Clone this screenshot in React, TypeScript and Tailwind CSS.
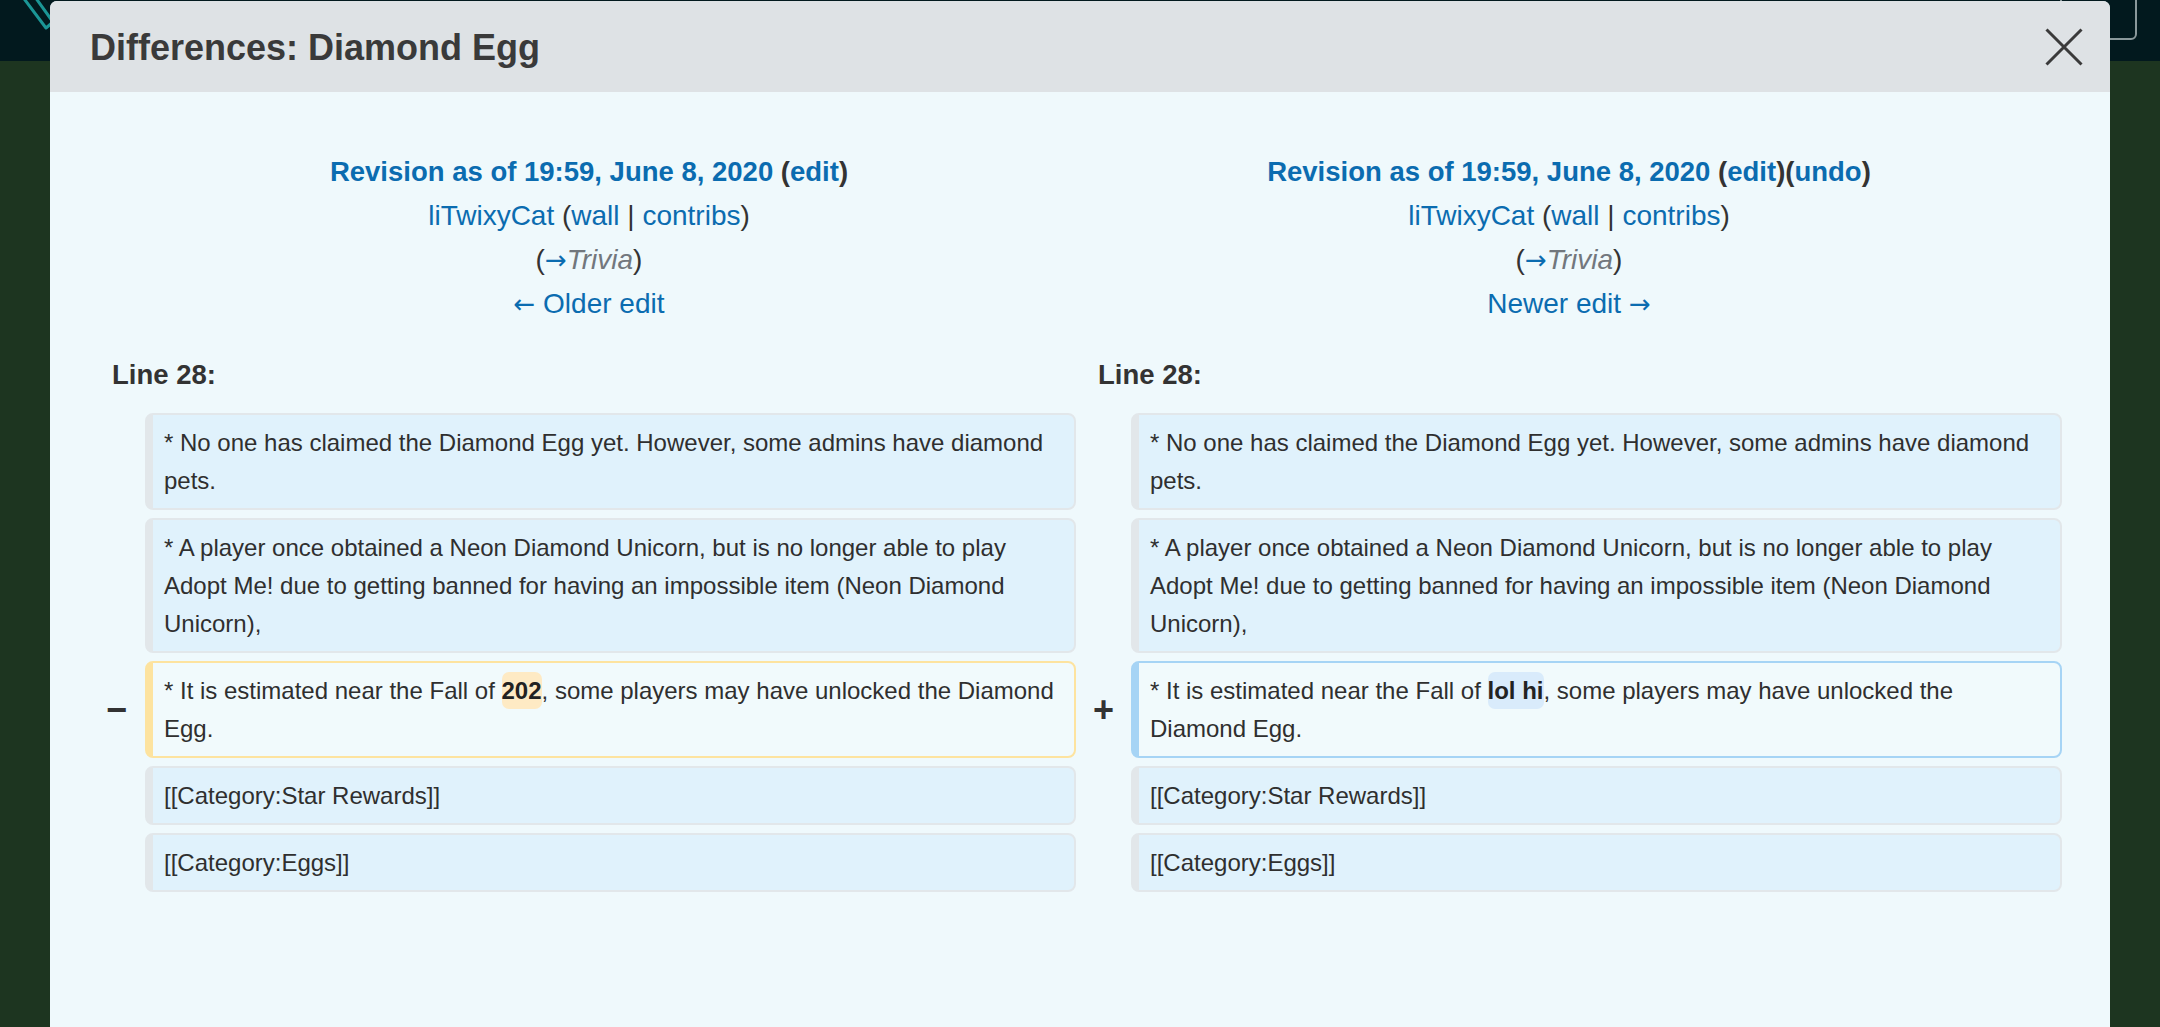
import React from 'react';

const font = "font-['Liberation_Sans',Arial,sans-serif]";
const arrow = "font-['DejaVu_Sans',sans-serif]";

type Row = {
  left: React.ReactNode;
  right: React.ReactNode;
  changed?: boolean;
};

const rows: Row[] = [
  {
    left: '* No one has claimed the Diamond Egg yet. However, some admins have diamond pets.',
    right: '* No one has claimed the Diamond Egg yet. However, some admins have diamond pets.',
  },
  {
    left: '* A player once obtained a Neon Diamond Unicorn, but is no longer able to play Adopt Me! due to getting banned for having an impossible item (Neon Diamond Unicorn),',
    right: '* A player once obtained a Neon Diamond Unicorn, but is no longer able to play Adopt Me! due to getting banned for having an impossible item (Neon Diamond Unicorn),',
  },
  {
    changed: true,
    left: (
      <>
        * It is estimated near the Fall of{' '}
        <span className="font-bold text-[#222] bg-[#feeac4] rounded-[7px] py-[5px]">202</span>, some players may have
        unlocked the Diamond Egg.
      </>
    ),
    right: (
      <>
        * It is estimated near the Fall of{' '}
        <span className="font-bold text-[#222] bg-[#d9ebfb] rounded-[7px] py-[5px]">lol hi</span>, some players may
        have unlocked the Diamond Egg.
      </>
    ),
  },
  { left: '[[Category:Star Rewards]]', right: '[[Category:Star Rewards]]' },
  { left: '[[Category:Eggs]]', right: '[[Category:Eggs]]' },
];

const boxBase = 'rounded-[8px] border-solid border-t-2 border-r-2 border-b-2 border-l-[8px] pl-[11px] pr-[11px] py-[8.5px] text-[24px] leading-[38px] text-[#2f2f2f]';

const Link = ({ children }: { children: React.ReactNode }) => (
  <span className="text-[#0b6cb0]">{children}</span>
);

const RevisionHeader = ({ side }: { side: 'left' | 'right' }) => (
  <div className="flex flex-col items-center text-[28px] leading-[44px] text-[#333]">
    <div className="font-bold text-[27.5px]">
      <Link>Revision as of 19:59, June 8, 2020</Link> (<Link>edit</Link>)
      {side === 'right' && (
        <>
          (<Link>undo</Link>)
        </>
      )}
    </div>
    <div>
      <Link>liTwixyCat</Link> (<Link>wall</Link> | <Link>contribs</Link>)
    </div>
    <div>
      (<span className={`${arrow} text-[#0b6cb0] text-[26px]`}>→</span>
      <span className="italic text-[#72777d]">Trivia</span>)
    </div>
    <div>
      {side === 'left' ? (
        <Link>
          <span className={`${arrow} text-[26px]`}>←</span> Older edit
        </Link>
      ) : (
        <Link>
          Newer edit <span className={`${arrow} text-[26px]`}>→</span>
        </Link>
      )}
    </div>
  </div>
);

export default function App() {
  return (
    <div className={`${font} relative w-full h-[1027px] overflow-hidden bg-[#1d3520]`}>
      {/* page behind the modal */}
      <div className="h-[61px] bg-[#02191e]" />
      <svg className="absolute left-0 top-0" width="60" height="40" viewBox="0 0 60 40">
        <path d="M22 -4 L46 28 L53 22 L30 -10" fill="none" stroke="#1b9696" strokeWidth="3" strokeLinejoin="round" />
      </svg>
      <div className="absolute left-[2060px] top-[-12px] w-[77px] h-[52px] border-2 border-[#8a989b] rounded-[6px]" />

      {/* modal */}
      <div className="absolute left-[50px] top-[1px] w-[2060px] h-[1040px] rounded-t-[7px] overflow-hidden bg-[#eff9fc]">
        <div className="h-[91px] bg-[#dee2e5] flex items-center justify-between pl-[40px] pr-[27px]">
          <h2 className="text-[36px] font-bold text-[#3a3a3a] pt-[2px]">Differences: Diamond Egg</h2>
          <svg width="38" height="38" viewBox="0 0 38 38" className="mt-[1px]">
            <path d="M1.5 1.5 L36.5 36.5 M36.5 1.5 L1.5 36.5" stroke="#3a3a3a" strokeWidth="3" />
          </svg>
        </div>

        <div className="pl-[52px] pr-[48px] pt-[58px]">
          <div className="grid grid-cols-[43px_931px_55px_931px] gap-y-[8px]">
            <div className="col-span-2">
              <RevisionHeader side="left" />
            </div>
            <div className="col-span-2">
              <RevisionHeader side="right" />
            </div>

            <div className="col-span-2 pl-[10px] mt-[22px] mb-[11px] text-[27.5px] leading-[38px] font-bold text-[#333]">
              Line 28:
            </div>
            <div className="col-span-2 pl-[22px] mt-[22px] mb-[11px] text-[27.5px] leading-[38px] font-bold text-[#333]">
              Line 28:
            </div>

            {rows.map((row, i) => (
              <React.Fragment key={i}>
                <div className="flex items-center justify-end pr-[18px] text-[36px] leading-none font-bold text-[#333]">
                  {row.changed ? '−' : ''}
                </div>
                <div
                  className={
                    row.changed
                      ? `${boxBase} bg-[#f1fafc] border-[#fde39f]`
                      : `${boxBase} bg-[#e0f2fc] border-[#e2e7ea]`
                  }
                >
                  {row.left}
                </div>
                <div className="flex items-center justify-end pr-[17px] text-[36px] leading-none font-bold text-[#333]">
                  {row.changed ? '+' : ''}
                </div>
                <div
                  className={
                    row.changed
                      ? `${boxBase} bg-[#f1fafc] border-[#a6d4f5]`
                      : `${boxBase} bg-[#e0f2fc] border-[#e2e7ea]`
                  }
                >
                  {row.right}
                </div>
              </React.Fragment>
            ))}
          </div>
        </div>
      </div>
    </div>
  );
}
